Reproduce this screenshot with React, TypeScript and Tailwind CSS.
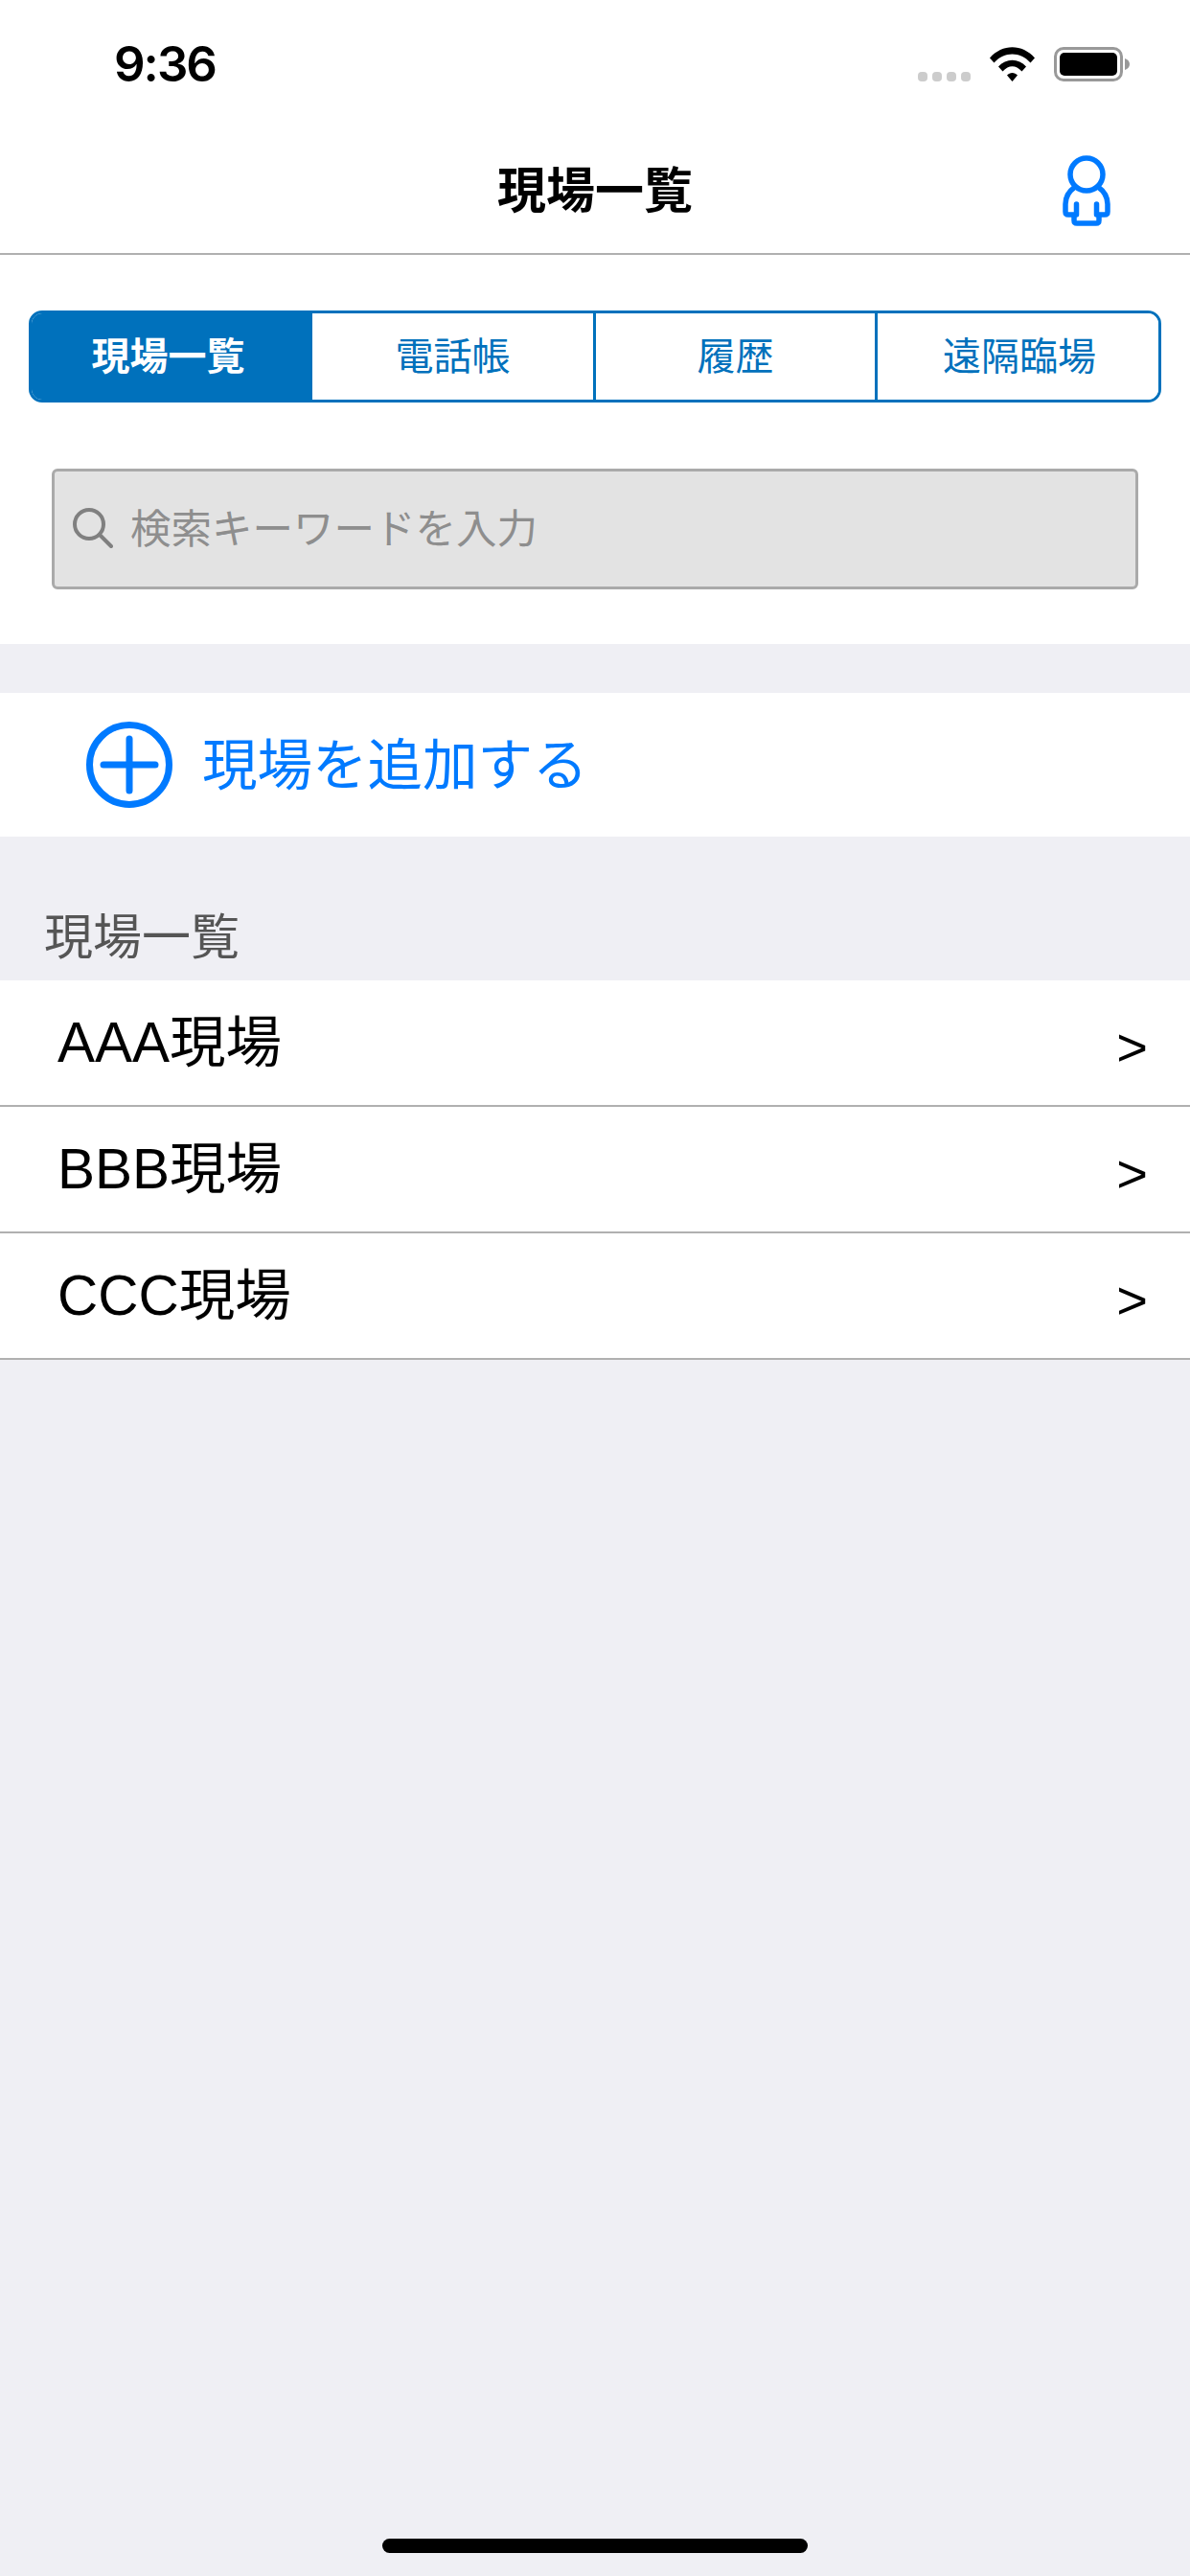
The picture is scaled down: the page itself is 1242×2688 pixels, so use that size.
const FONT = "font-['Liberation_Sans','Noto_Sans_CJK_JP',sans-serif]";

const tabs = [
  { label: '現場一覧', active: true, width: 'w-[293px] pr-[8px]' },
  { label: '電話帳', active: false, width: 'w-[296px]' },
  { label: '履歴', active: false, width: 'w-[294px]' },
  { label: '遠隔臨場', active: false, width: 'flex-1 pl-[3px]' },
];

const sites = ['AAA現場', 'BBB現場', 'CCC現場'];

function StatusBar() {
  return (
    <div className="flex h-[132px] items-start justify-between pl-[119px] pr-[63px]">
      <span className="mt-[35px] font-['Inter',sans-serif] text-[51px] leading-[64px] font-semibold tracking-[-2px] text-black">9:36</span>
      <div className="mt-[49px] flex items-start">
        <div className="mt-[26px] flex gap-[5px]">
          {[0, 1, 2, 3].map((i) => (
            <span key={i} className="h-[10px] w-[10px] rounded-[4px] bg-[#cccccc]" />
          ))}
        </div>
        <svg className="ml-[20px]" width="47" height="36" viewBox="0 0 47 36">
          <path d="M0 11.5C13-3.5 34-3.5 47 11.5L42.5 16.5C32 4.5 15 4.5 4.5 16.5Z" fill="#000" />
          <path d="M9 20.5C17 11.5 30 11.5 38 20.5L33.5 25.5C27 18.5 20 18.5 13.5 25.5Z" fill="#000" />
          <path d="M18 29.5C21 26 26 26 29 29.5L23.5 36Z" fill="#000" />
        </svg>
        <div className="ml-[20px] flex items-center">
          <div className="h-[36px] w-[72px] rounded-[10px] border-[3px] border-[#999999] p-[3px]">
            <div className="h-full w-full rounded-[5px] bg-black" />
          </div>
          <svg className="ml-[2px]" width="5" height="12" viewBox="0 0 5 12">
            <path d="M0 0C3 1 5 3 5 6C5 9 3 11 0 12Z" fill="#999" />
          </svg>
        </div>
      </div>
    </div>
  );
}

function NavBar() {
  return (
    <div className="relative flex h-[134px] items-center justify-center border-b-2 border-[#b0b0b0]">
      <h1 className="mt-[2px] text-[51px] leading-none font-bold text-black">現場一覧</h1>
      <svg className="absolute top-[30px] right-[83px]" width="50" height="74" viewBox="0 0 50 74" fill="none" stroke="#007aff" strokeWidth="5.5" strokeLinecap="round" strokeLinejoin="round">
        <circle cx="25" cy="20" r="17" />
        <path d="M13 33C6 38 3 43 3 51V59C3 61 4 62 6 62H12V68C12 70 13 71 15 71H35C37 71 38 70 38 68V62H44C46 62 47 61 47 59V51C47 43 44 38 37 33" />
        <path d="M14.5 51V62M35.5 51V62" />
      </svg>
    </div>
  );
}

function SegmentedTabs() {
  return (
    <div className="mx-[30px] flex h-[96px] overflow-hidden rounded-[14px] border-[3px] border-[#0071bc]">
      {tabs.map((t, i) => (
        <div
          key={t.label}
          className={`flex items-center justify-center text-[40px] leading-none ${t.width} ${i > 0 && i < 3 ? 'border-r-[3px] border-[#0071bc]' : ''} ${
            t.active ? 'bg-[#0071bc] font-bold text-white' : 'bg-white text-[#0071bc]'
          }`}
        >
          {t.label}
        </div>
      ))}
    </div>
  );
}

function SearchBox() {
  return (
    <div className="mx-[54px] mt-[69px] flex h-[126px] items-center rounded-[6px] border-[3px] border-[#aaaaaa] bg-[#e3e3e3] pl-[19px]">
      <svg className="-mt-[2px]" width="42" height="42" viewBox="0 0 42 42" fill="none" stroke="#808080" strokeWidth="4" strokeLinecap="round">
        <circle cx="17" cy="17" r="15" />
        <path d="M28 28L40 40" />
      </svg>
      <span className="mt-[2px] ml-[18px] text-[42.5px] leading-none text-[#8e8e8e]">検索キーワードを入力</span>
    </div>
  );
}

export default function App() {
  return (
    <div className={`relative flex h-[2688px] w-[1242px] flex-col overflow-hidden bg-[#efeff4] ${FONT}`}>
      <div className="bg-white pb-[57px]">
        <StatusBar />
        <NavBar />
        <div className="h-[58px]" />
        <SegmentedTabs />
        <SearchBox />
      </div>

      <div className="mt-[51px] flex h-[150px] items-center bg-white pl-[90px]">
        <svg width="90" height="90" viewBox="0 0 90 90" fill="none" stroke="#007aff" strokeLinecap="round">
          <circle cx="45" cy="45" r="41.5" strokeWidth="7" />
          <path d="M45 18V72M18 45H72" strokeWidth="7" />
        </svg>
        <span className="mt-[3px] ml-[31px] text-[57.5px] leading-none text-[#007aff]">現場を追加する</span>
      </div>

      <div className="flex h-[150px] items-end pb-[14px] pl-[46px] text-[51px] leading-[60px] text-[#555555]">現場一覧</div>

      <div>
        {sites.map((s) => (
          <div key={s} className="flex h-[132px] items-center justify-between border-b-2 border-[#b0b0b0] bg-white pr-[44px] pl-[60px]">
            <span className="mt-[1px] text-[58.5px] leading-none text-black">{s}</span>
            <span className="mt-[9px] text-[56px] leading-none text-black">&gt;</span>
          </div>
        ))}
      </div>

      <div className="absolute bottom-[24px] left-[399px] h-[15px] w-[444px] rounded-full bg-black" />
    </div>
  );
}
